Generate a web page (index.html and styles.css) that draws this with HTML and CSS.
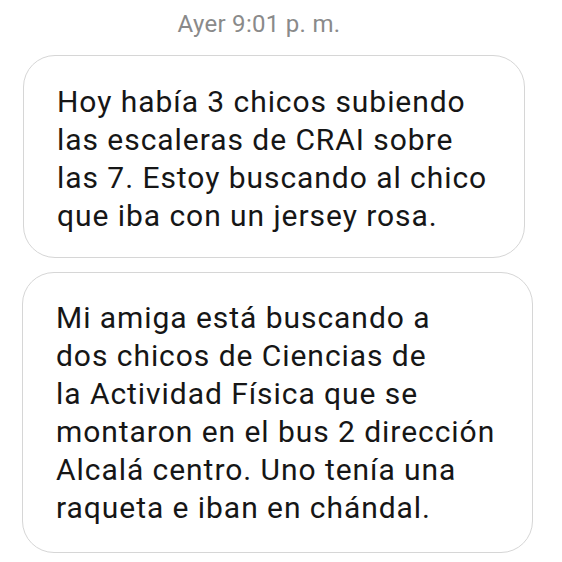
FILE: index.html
```html
<!DOCTYPE html>
<html lang="es">
<head>
<meta charset="utf-8">
<link rel="stylesheet" href="styles.css">
</head>
<body>
<div class="chat">
  <div class="time">Ayer 9:01 p. m.</div>
  <div class="bubble b1">Hoy había 3 chicos subiendo<br>las escaleras de CRAI sobre<br>las 7. Estoy buscando al chico<br>que iba con un jersey rosa.</div>
  <div class="bubble b2">Mi amiga está buscando a<br>dos chicos de Ciencias de<br>la Actividad Física que se<br>montaron en el bus 2 dirección<br>Alcalá centro. Uno tenía una<br>raqueta e iban en chándal.</div>
</div>
</body>
</html>
```
FILE: styles.css
```css
html, body {
  margin: 0;
  padding: 0;
  background: #ffffff;
}
body {
  font-family: Roboto, "Noto Sans", sans-serif;
  width: 562px;
  height: 562px;
  overflow: hidden;
}
.chat {
  display: flex;
  flex-direction: column;
  align-items: flex-start;
  padding: 0 0 0 22px;
}
.time {
  align-self: stretch;
  padding-right: 66px;
  text-align: center;
  color: #8a8a8a;
  font-size: 24px;
  line-height: 28px;
  letter-spacing: 0.3px;
  padding-top: 10px;
  margin-bottom: 17px;
}
.bubble {
  box-sizing: border-box;
  border: 1.5px solid #d6d6d6;
  border-radius: 32px;
  background: #fff;
  color: #161616;
  font-size: 30px;
  line-height: 38px;
  letter-spacing: 0.95px;
  padding: 27px 10px 22px 33px;
}
.b1 {
  width: 502px;
  margin-left: 1px;
}
.b2 {
  width: 511px;
  margin-top: 14px;
  padding-top: 26px;
  padding-bottom: 25px;
}
```
